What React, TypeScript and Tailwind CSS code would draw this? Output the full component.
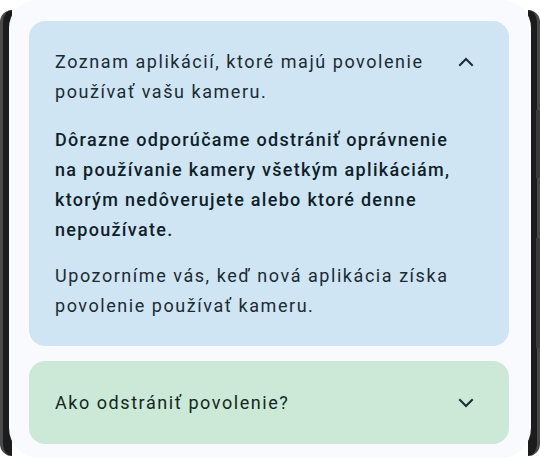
import React, { useState } from 'react';

function Chevron({ up }: { up: boolean }) {
  return (
    <svg width="24" height="24" viewBox="0 0 24 24" className="shrink-0 text-[#1b2b33]">
      <path
        d={up ? 'M6 15l6-6 6 6' : 'M6 9l6 6 6-6'}
        fill="none"
        stroke="currentColor"
        strokeWidth="2"
        strokeLinecap="square"
      />
    </svg>
  );
}

export default function App() {
  const [openFirst, setOpenFirst] = useState(true);
  const [openSecond, setOpenSecond] = useState(false);

  return (
    <div
      className="relative w-[540px] h-[464px] overflow-hidden bg-white"
      style={{ fontFamily: 'Roboto, "Noto Sans", sans-serif' }}
    >
      {/* phone frame edges */}
      <div className="absolute left-0 top-[10px] w-[12px] h-[446px] rounded-l-[14px] bg-[#1c1c1c] border-l-[3px] border-[#4a4a4a]" />
      <div className="absolute right-0 top-[10px] w-[12px] h-[446px] rounded-r-[14px] bg-[#1c1c1c] border-r-[3px] border-[#4a4a4a]" />
      <div className="absolute right-0 top-[110px] w-[4px] h-[68px] bg-[#3a3a3a]" />
      <div className="absolute right-0 top-[238px] w-[4px] h-[110px] bg-[#3a3a3a]" />

      <div className="relative mx-[9px] h-[458px] rounded-b-[30px] rounded-t-[28px] bg-[#f8fafd] pl-[20px] pr-[22px] pt-[21px] flex flex-col gap-[15px]">
        <div className="rounded-[16px] bg-[#cfe5f4] text-[#1b2b33]">
          <button
            className="w-full flex items-start justify-between pl-[26px] pr-[31px] pt-[26px] text-left"
            onClick={() => setOpenFirst(!openFirst)}
          >
            <span className="text-[18px] leading-[30px] tracking-[1.55px] w-[385px]">
              Zoznam aplikácií, ktoré majú povolenie používať vašu kameru.
            </span>
            <span className="mt-[3px]">
              <Chevron up={openFirst} />
            </span>
          </button>
          {openFirst && (
            <div className="px-[26px] pb-[25px] text-[18px] leading-[30px]">
              <p className="mt-[18px] font-medium tracking-[1.3px] text-[#0f1f29] w-[410px]">
                Dôrazne odporúčame odstrániť oprávnenie na používanie kamery všetkým aplikáciám, ktorým nedôverujete alebo ktoré denne nepoužívate.
              </p>
              <p className="mt-[16px] tracking-[1.55px] w-[410px]">
                Upozorníme vás, keď nová aplikácia získa povolenie používať kameru.
              </p>
            </div>
          )}
          {!openFirst && <div className="h-[26px]" />}
        </div>

        <div className="rounded-[16px] bg-[#cce9d7] text-[#13271c]">
          <button
            className="w-full flex items-center justify-between pl-[26px] pr-[31px] py-[26px] text-left"
            onClick={() => setOpenSecond(!openSecond)}
          >
            <span className="text-[18px] leading-[31px] tracking-[1.55px]">Ako odstrániť povolenie?</span>
            <Chevron up={openSecond} />
          </button>
        </div>
      </div>
    </div>
  );
}
